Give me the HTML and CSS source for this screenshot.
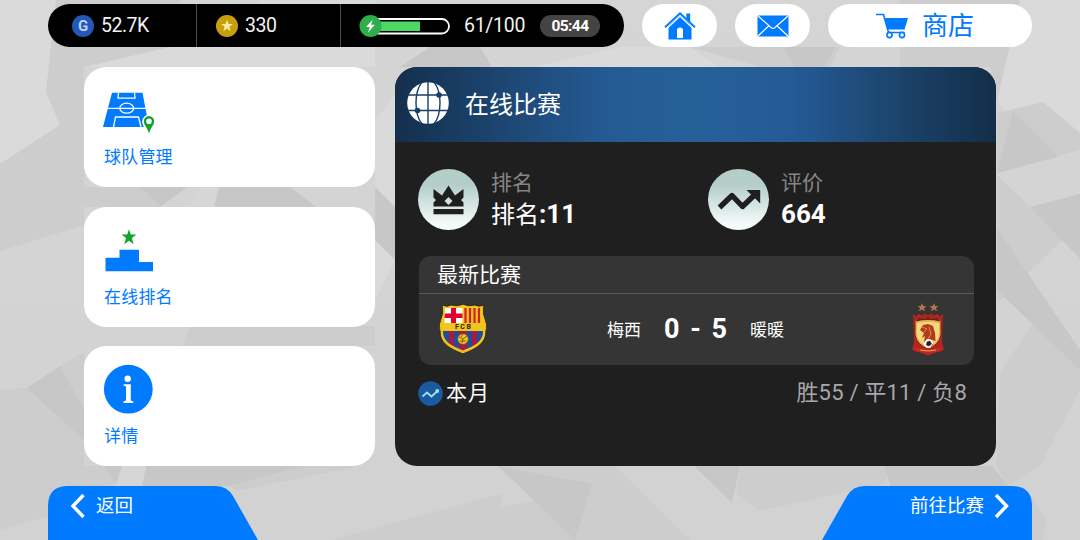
FILE: index.html
```html
<!DOCTYPE html>
<html lang="zh-CN">

<head>
  <meta charset="UTF-8" />
  <meta name="viewport" content="width=device-width, initial-scale=1.0" />
  <title>在线比赛</title>
  <link rel="stylesheet" href="styles.css">
</head>

<body>
  <svg class="backdrop" viewBox="0 0 1080 540" preserveAspectRatio="none" aria-hidden="true">
    <g fill="#dadada">
      <path d="M0 0H56L46 92 60 125 0 164Z" />
      <path d="M260 0H375V67H84L100 47H200Z" />
      <path d="M375 120L395 95V260L375 300Z" />
      <path d="M535 67L620 47H690L720 67Z" />
      <path d="M1020 0H1080V133L1043 102 1004 112 998 100Z" />
    </g>
    <g fill="#cdcdcd">
      <path d="M56 0H180L170 47 84 67 84 110 60 125 46 92Z" />
      <path d="M0 164L60 125 84 110V225L0 251Z" />
      <path d="M0 390L27 388 84 352V466H104L116 484 48 500V516L0 530Z" />
      <path d="M84 187H140L160 207H84Z" />
      <path d="M190 326H375V346H182Z" />
      <path d="M236 491L228 484 303 466H360Z" />
      <path d="M331 540L503 493 500 508 592 485 575 540Z" />
      <path d="M498 466H615L690 540H575Z" />
      <path d="M740 466H888L885 484 758 511 737 493Z" />
      <path d="M997 113L1043 102 1080 133V150L997 173Z" />
      <path d="M997 175L1030 207 1080 194V258L1062 240 997 304Z" />
      <path d="M1000 372L1046 304 1080 350V390L1040 466 1008 486 996 466Z" />
      <path d="M1032 496L1046 520 1043 540H1032Z" />
      <path d="M690 47H840L830 67H760Z" />
      <path d="M900 0H1020L997 100 990 67 900 67Z" />
    </g>
    <g fill="#c7c7c7">
      <path d="M430 47H480L492 67H400Z" />
      <path d="M140 187H187L160 207Z" />
      <path d="M219 187H290L316 207H214Z" />
      <path d="M375 187L395 207V260L375 240Z" />
      <path d="M27 388L60 366 84 410V440Z" />
      <path d="M104 466H122L116 484Z" />
      <path d="M146 466H303L228 486H142Z" />
      <path d="M498 466L592 484 575 540Z" />
      <path d="M694 466H740L732 503Z" />
      <path d="M885 466H992L1008 486H890Z" />
      <path d="M1013 111L1058 157 997 173Z" />
      <path d="M1030 207L1080 194V258L1062 240Z" />
      <path d="M997 228L1080 350V370L997 290Z" />
      <path d="M783 47H835L825 67H795Z" />
    </g>
    <g fill="#d6d6d6">
      <path d="M122 466H146L142 486H116Z" />
      <path d="M201 187H219L214 207H190Z" />
    </g>
  </svg>

  <header class="topbar">
    <div class="wallet">
      <div class="balance balance-gp">
        <span class="coin coin-gp">G</span>
        <span>52.7K</span>
      </div>
      <div class="balance balance-coins">
        <svg class="coin" viewBox="0 0 22 22">
          <circle cx="11" cy="11" r="11" fill="#c79f0c" />
          <path d="M11 4.8L12.5 9.1H17L13.4 11.8 14.7 16.2 11 13.6 7.3 16.2 8.6 11.8 5 9.1H9.5Z" fill="#fbe9a0" />
        </svg>
        <span>330</span>
      </div>
      <div class="balance balance-energy">
        <svg class="energy" viewBox="0 0 92 24">
          <rect x="12" y="5" width="78" height="14.5" rx="7.2" fill="#000" stroke="#fff" stroke-width="1.8" />
          <rect x="18" y="7.500" width="43" height="9.500" fill="#4bd964" />
          <circle cx="11.500" cy="12" r="11" fill="#2fae4c" />
          <path d="M13.800 5.500L7 13H10.800L8.800 18.800 15.800 10.800H12Z" fill="#fff" />
        </svg>
        <span class="energy-value">61/100</span>
        <span class="timer">05:44</span>
      </div>
    </div>
    <a class="pill" href="#" aria-label="主页">
      <svg width="32" height="28" viewBox="0 0 32 28" fill="#007aff">
        <path d="M4.500 14L16 3.400 27.500 14V27.500H4.500ZM13 26H19V18.500A3 3 0 0 0 13 18.500Z" fill-rule="evenodd" />
        <path d="M22.300 1.500H26.200V10L22.300 6.300Z" />
        <path d="M3.500 16L16 4.400 28.500 16" fill="none" stroke="#fff" stroke-width="1.100" />
        <path d="M1 15.200L16 1.400 31 15.200" fill="none" stroke="#007aff" stroke-width="1.900" />
      </svg>
    </a>
    <a class="pill" href="#" aria-label="邮件">
      <svg width="32" height="22" viewBox="0 0 32 22">
        <rect x="0.500" y="0.500" width="31" height="21" rx="1" fill="#007aff" />
        <path d="M1 1L14.300 12.700Q16 14 17.700 12.700L31 1M1 21L12 10.800M31 21L20 10.800" fill="none" stroke="#fff" stroke-width="1.200" />
      </svg>
    </a>
    <a class="pill pill-shop" href="#">
      <svg width="32" height="26" viewBox="0 0 32 26" fill="none" stroke="#007aff" stroke-width="1.600">
        <path d="M0 1.500H7.500L12.500 19.500H28.500" />
        <path d="M9 5H32L28.500 16.500H12Z" fill="#007aff" stroke="none" />
        <circle cx="13.500" cy="22" r="2.600" fill="#fff" />
        <circle cx="26" cy="22" r="2.600" fill="#fff" />
      </svg>
      <span>商店</span>
    </a>
  </header>

  <main class="content">
    <nav class="menu">
      <a class="card" href="#">
        <svg class="card-icon" viewBox="0 0 52 50">
          <path d="M8 7.800H38.500L45 42H-1Z" fill="#007aff" />
          <g fill="none" stroke="#fff" stroke-width="1.300">
            <path d="M14.500 7.800L14 13.200H31L30.500 7.800M3 23.400H15.500M30 23.400H44M9.500 42L11.500 32H34.500L37 42" />
            <ellipse cx="22.700" cy="23.200" rx="7" ry="5" />
            <path d="M15.700 23.400H30" />
          </g>
          <path d="M45 50.500C42 44 38.200 41 38.200 36.500A6.800 6.800 0 0 1 51.800 36.500C51.800 41 48 44 45 50.500Z" fill="#fff" />
          <path d="M45 48.500C43.500 42.500 39.800 40.300 39.800 36.200A5.200 5.200 0 0 1 50.200 36.200C50.200 40.300 46.500 42.500 45 48.500ZM45 33.500A2.800 2.800 0 1 0 45 39.100 2.800 2.800 0 1 0 45 33.500Z" fill="#13a32b" fill-rule="evenodd" />
        </svg>
        <span>球队管理</span>
      </a>
      <a class="card" href="#">
        <svg class="card-icon" viewBox="0 0 52 50">
          <path d="M25 4.200L26.800 9.600H32.400L27.900 13 29.600 19.200 25 15.700 20.300 19.200 22 13 17.500 9.600H23.200Z" fill="#13a32b" />
          <path d="M1.500 32.700H15.500V24.700H35V37H49V46.300H1.500Z" fill="#007aff" />
        </svg>
        <span>在线排名</span>
      </a>
      <a class="card" href="#">
        <svg class="card-icon" viewBox="0 0 52 50">
          <circle cx="24.300" cy="25.200" r="24.400" fill="#007aff" />
          <circle cx="23.700" cy="14.800" r="3.200" fill="#fff" />
          <path d="M19.500 20.200H26.800V36.500L29.300 37.500V39H19.500V37.500L22 36.500V22.500L19.500 21.500Z" fill="#fff" />
        </svg>
        <span>详情</span>
      </a>
    </nav>

    <section class="panel">
      <div class="panel-head">
        <svg width="42" height="42" viewBox="0 0 42 42">
          <circle cx="21" cy="21" r="20.800" fill="#fff" />
          <g fill="none" stroke="#173f67" stroke-width="1.400">
            <path d="M21 0V42M0 13H42M0 28.500H42" />
            <path d="M15 0C7 10 7 32 15 42M27 0C35 10 35 32 27 42" />
          </g>
          <circle cx="32" cy="13" r="2.800" fill="#173f67" />
          <circle cx="10.500" cy="28.500" r="2.800" fill="#173f67" />
        </svg>
        <h1>在线比赛</h1>
      </div>

      <div class="stats">
        <div class="stat">
          <span class="stat-badge">
            <svg width="31" height="30" viewBox="0 0 31 30" fill="#1f1f1f">
              <path d="M0.500 4L9 10.500 15.500 0.500 22 10.500 30.500 4V21.500H0.500V17.500L3 15 0.500 12.500ZM15.500 12L11.500 16 15.500 20 19.500 16ZM30.500 12.500L28 15 30.500 17.500Z" fill-rule="evenodd" />
              <path d="M0.500 24H30.500V29.300H0.500Z" />
            </svg>
          </span>
          <dl>
            <dt>排名</dt>
            <dd>排名<b>:11</b></dd>
          </dl>
        </div>
        <div class="stat">
          <span class="stat-badge">
            <svg width="44" height="24" viewBox="0 0 44 24">
              <path d="M2.500 19.500L15 7.500 25.500 18.500 37.500 7" fill="none" stroke="#1f1f1f" stroke-width="5.400" stroke-linejoin="round" />
              <path d="M29.500 2H43.200V15.500L40 12.300 33 5.500Z" fill="#1f1f1f" />
            </svg>
          </span>
          <dl>
            <dt>评价</dt>
            <dd><b>664</b></dd>
          </dl>
        </div>
      </div>

      <div class="match">
        <h2>最新比赛</h2>
        <div class="match-row">
          <svg class="crest" width="50" height="52" viewBox="0 0 50 52">
            <defs>
              <clipPath id="shield">
                <path d="M5 4Q9 6 13 3.500Q19 6 25 3Q31 6 37 3.500Q41 6 45 4Q43 10 45 15Q48 21 46 28C47 40 35 45 25 49C15 45 3 40 4 28Q2 21 5 15Q7 10 5 4Z" />
              </clipPath>
            </defs>
            <path d="M4 2Q9 4.500 13 2Q19 4 25 1.200Q31 4 37 2Q41 4.500 46 2Q44 10 46.500 15Q50 22 47.800 28C48.500 41 36 46.500 25 50.800C14 46.500 1.500 41 2.200 28Q0 22 3.500 15Q6 10 4 2Z" fill="#f2c51d" stroke="#25201a" stroke-width="0.800" />
            <g clip-path="url(#shield)">
              <path d="M6.500 5H24.500V20H6.500Z" fill="#fff" />
              <path d="M13 5H18V20H13ZM6.500 10.500H24.500V15H6.500Z" fill="#e2002f" />
              <path d="M27.500 5V20M32 5V20M36.500 5V20M41 5V20" stroke="#d51f2e" stroke-width="2.200" />
              <path d="M3 28H47V50H3Z" fill="#214b9c" />
              <path d="M11 28H16V50H11ZM21 28H29V50H21ZM34 28H39V50H34Z" fill="#a51c43" />
            </g>
            <path d="M6 4Q7 10 5 15Q2.500 22 4 28C3.500 40 15 44.500 25 48.500C35 44.500 46.500 40 46 28Q47.500 22 45 15Q43 10 44 4" fill="none" stroke="#f2c51d" stroke-width="2" />
            <path d="M2.500 20H47.500V27.500H2.500Z" fill="#f2c51d" />
            <text x="25.700" y="26.200" class="crest-text">FCB</text>
            <circle cx="25" cy="36" r="5.300" fill="#f2c51d" stroke="#755218" stroke-width="0.600" />
            <path d="M21 34L25 36 24 40M25 36L29 33M22 38L28 38M25 31L23 34" fill="none" stroke="#755218" stroke-width="0.900" />
          </svg>
          <div class="score">
            <span class="player">梅西</span>
            <b>0 - 5</b>
            <span class="player">暖暖</span>
          </div>
          <svg class="crest" width="34" height="54" viewBox="0 0 34 54">
            <path d="M11 1L12.200 4H15.500L13 6 14 9.300 11 7.400 8 9.300 9 6 6.500 4H9.800ZM23 1L24.200 4H27.500L25 6 26 9.300 23 7.400 20 9.300 21 6 18.500 4H21.800Z" fill="#b0754b" />
            <path d="M2 12L5 14.500 8 12 11 13.500 14 11.500 17 13.500 20 11.500 23 13.500 26 12 29 14.500 32 12 31 40 33 48 23 51 17 53.500 11 51 1 48 3 40Z" fill="#b9231f" />
            <path d="M4 17Q17 14 30 17V33Q28 43 17 47Q6 43 4 33Z" fill="#e4b84d" stroke="#7d1715" />
            <path d="M6 21.500Q17 18 28 21.500V33Q26 42 17 44Q8 42 6 33Z" fill="#f4d780" />
            <path d="M5 18.500Q17 15.500 29 18.500" fill="none" stroke="#7d1715" stroke-width="2" />
            <path d="M9 28L12 23 17 22 22 24 24 31 24.500 39 20 38 13 39 14 34 11 36 13 31Z" fill="#b43a1d" />
            <path d="M11 25L16 27 13 30M18 25L20 32 17 37" stroke="#e38e38" fill="none" />
            <circle cx="17.500" cy="41.500" r="4.600" fill="#fff" />
            <path d="M16 40L19 39 20.500 42 18 44 15.500 43ZM12.900 40L15 38M22 42L20 45" fill="#41101b" stroke="#41101b" stroke-width="0.600" />
            <path d="M2 45Q17 49 32 45L30 49Q17 52 4 49Z" fill="#c52a22" />
            <path d="M9 48Q17 50 25 48" stroke="#e4a54d" fill="none" />
          </svg>
        </div>
      </div>

      <div class="month">
        <svg width="25" height="25" viewBox="0 0 25 25">
          <circle cx="12.500" cy="12.500" r="12.300" fill="#185c9f" />
          <path d="M4.500 15.500L9 11.500 13.500 15.500 19 10.500" fill="none" stroke="#a9dcf2" stroke-width="1.700" />
          <circle cx="19.300" cy="10" r="1.900" fill="#a9dcf2" />
        </svg>
        <h3>本月</h3>
        <p>胜55 / 平11 / 负8</p>
      </div>
    </section>
  </main>

  <footer class="actions">
    <a class="action" href="#">
      <svg class="action-shape" viewBox="0 0 210 54">
        <path d="M0 54V20Q0 0 20 0H168Q179 0 185 10L210 54Z" fill="#007aff" />
      </svg>
      <svg class="chevron" width="16" height="26" viewBox="0 0 16 26">
        <path d="M13.500 2L3 13 13.500 24" />
      </svg>
      <span>返回</span>
    </a>
    <a class="action action-next" href="#">
      <svg class="action-shape" viewBox="0 0 210 54">
        <path d="M210 54V20Q210 0 190 0H42Q31 0 25 10L0 54Z" fill="#007aff" />
      </svg>
      <span>前往比赛</span>
      <svg class="chevron" width="16" height="26" viewBox="0 0 16 26">
        <path d="M2 2L12.500 13 2 24" />
      </svg>
    </a>
  </footer>
</body>

</html>
```
FILE: styles.css
```css
* {
  box-sizing: border-box;
}

body {
  margin: 0;
  height: 540px;
  display: flex;
  flex-direction: column;
  overflow: hidden;
  position: relative;
  background: linear-gradient(#d5d5d5, #d2d2d2);
  font-family: Roboto, "Noto Sans CJK SC", sans-serif;
}

a {
  color: #007aff;
  text-decoration: none;
}

h1,
h2,
h3,
p,
dl,
dd {
  margin: 0;
  font-weight: 400;
}

svg {
  display: block;
  flex: none;
}

.backdrop {
  position: absolute;
  inset: 0;
  width: 100%;
  height: 100%;
  z-index: -1;
}

/* top bar */
.topbar {
  display: flex;
  gap: 18px;
  padding: 4px 48px 0;
  height: 67px;
  flex: none;
}

.wallet {
  display: flex;
  width: 576px;
  height: 43px;
  border-radius: 22px;
  background: #000;
  color: #f2f2f2;
  font-size: 19.5px;
  letter-spacing: -0.5px;
}

.balance {
  display: flex;
  align-items: center;
  gap: 7px;
  border-left: 1px solid #4a4a4a;
}

.balance-gp {
  width: 148px;
  padding-left: 24px;
  border-left: 0;
}

.balance-coins {
  width: 144px;
  padding-left: 19px;
}

.balance-energy {
  flex: 1;
  gap: 0;
  padding-left: 18px;
}

.coin {
  width: 22px;
  height: 22px;
}

.coin-gp {
  border-radius: 50%;
  background: #2457b8;
  color: #b9d4ff;
  font-size: 15px;
  font-weight: 700;
  line-height: 22px;
  text-align: center;
  letter-spacing: 0;
}

.energy {
  width: 92px;
  height: 24px;
}

.energy-value {
  margin-left: 13px;
  width: 76px;
  letter-spacing: -0.3px;
}

.timer {
  width: 60px;
  height: 22px;
  border-radius: 11px;
  background: #444;
  color: #fff;
  font-size: 15.5px;
  font-weight: 700;
  line-height: 22px;
  text-align: center;
  letter-spacing: -0.6px;
}

.pill {
  display: flex;
  align-items: center;
  justify-content: center;
  width: 75px;
  height: 43px;
  border-radius: 22px;
  background: #fff;
}

.pill-shop {
  width: 204px;
  gap: 14px;
  padding-right: 10px;
  font-size: 26px;
  line-height: 43px;
}

.pill-shop span {
  padding-top: 2px;
}

/* main area */
.content {
  display: flex;
  gap: 20px;
  height: 399px;
  padding: 0 84px;
  flex: none;
}

.menu {
  width: 291px;
  display: flex;
  flex-direction: column;
  justify-content: space-between;
}

.card {
  height: 120px;
  padding: 18px 20px;
  border-radius: 22px;
  background: #fff;
  font-size: 17px;
  line-height: 20px;
  letter-spacing: 0.2px;
}

.card-icon {
  width: 52px;
  height: 50px;
  margin-bottom: 12px;
  overflow: visible;
}

.panel {
  width: 601px;
  border-radius: 22px;
  background: #1f1f1f;
  color: #fff;
  overflow: hidden;
}

.panel-head {
  display: flex;
  align-items: center;
  gap: 16px;
  height: 75px;
  padding: 0 12px 3px;
  background: linear-gradient(90deg, #132f4c, #1f4b7a 22%, #245b95 36%, #266099 50%, #245b96 66%, #1c446d 83%, #132e49);
}

.panel-head h1 {
  padding-top: 3px;
  font-size: 24px;
  line-height: 36px;
}

.stats {
  display: flex;
  padding: 27px 0 0 23px;
}

.stat {
  display: flex;
  gap: 12px;
  flex: none;
  width: 290px;
}

.stat-badge {
  display: flex;
  align-items: center;
  justify-content: center;
  width: 61px;
  height: 61px;
  border-radius: 50%;
  background: linear-gradient(#b4cdc9 25%, #f4fbfa 90%);
}

.stat dt {
  color: #858585;
  font-size: 21px;
  line-height: 28px;
}

.stat dd {
  font-size: 24px;
  line-height: 34px;
}

.stat b {
  font-size: 26px;
}

.match {
  width: 555px;
  height: 109px;
  margin: 24px 0 0 24px;
  border-radius: 12px;
  background: #353535;
}

.match h2 {
  height: 38px;
  padding-left: 18px;
  border-bottom: 1px solid #5a5a5a;
  font-size: 21px;
  line-height: 38px;
}

.match-row {
  display: flex;
  align-items: center;
  justify-content: space-between;
  height: 70px;
  padding: 0 29px 0 19px;
}

.crest-text {
  font-size: 7px;
  font-weight: 700;
  letter-spacing: 1.5px;
  text-anchor: middle;
  fill: #302716;
}

.score {
  display: flex;
  align-items: center;
  gap: 23px;
  margin-left: -8px;
}

.score b {
  font-size: 27px;
  word-spacing: 4px;
}

.player {
  padding-bottom: 2px;
  font-size: 17px;
}

.month {
  display: flex;
  align-items: center;
  height: 30px;
  margin: 13px 29px 0 23px;
}

.month h3 {
  margin-left: 3px;
  font-size: 21px;
  line-height: 30px;
  letter-spacing: 1px;
}

.month p {
  margin-left: auto;
  color: #a8a8a8;
  font-size: 22px;
  line-height: 30px;
  letter-spacing: 0.2px;
}

/* bottom buttons */
.actions {
  display: flex;
  justify-content: space-between;
  padding: 20px 48px 0;
}

.action {
  position: relative;
  display: flex;
  gap: 10px;
  width: 210px;
  height: 54px;
  padding: 7px 22px 0;
  color: #fff;
  font-size: 18.5px;
  line-height: 26px;
}

.action-next {
  justify-content: flex-end;
}

.action-shape {
  position: absolute;
  left: 0;
  top: 0;
  width: 210px;
  height: 54px;
  z-index: -1;
}

.chevron {
  fill: none;
  stroke: #fff;
  stroke-width: 3.4;
}
```
